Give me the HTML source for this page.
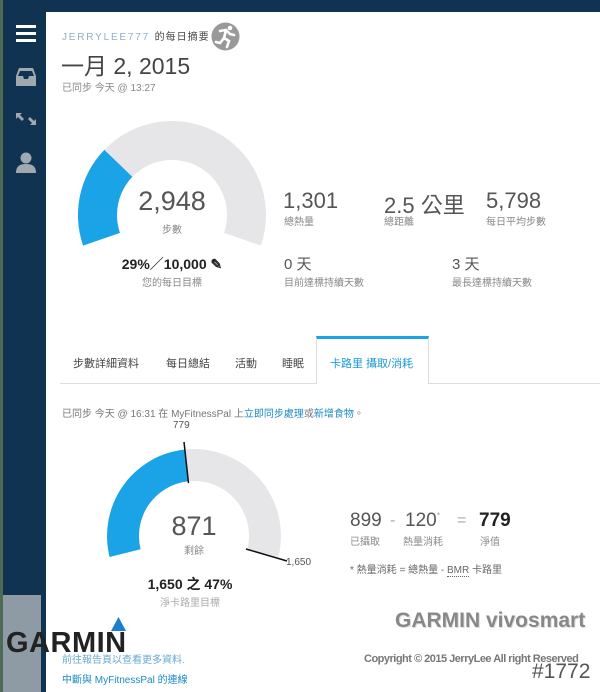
<!DOCTYPE html>
<html><head><meta charset="utf-8"><style>
*{margin:0;padding:0;box-sizing:border-box}
body{width:600px;height:692px;overflow:hidden;background:#fff;position:relative;font-family:"Liberation Sans","Noto Sans CJK TC",sans-serif;color:#333}
.a{position:absolute;white-space:nowrap}
.g{color:#888;font-size:10px}
.n{font-weight:normal;color:#555}
</style></head><body>
<div class="a" style="left:0;top:0;width:600px;height:12px;background:#0f3350"></div>
<div class="a" style="left:0;top:0;width:46px;height:692px;background:#0f3350"></div>
<div class="a" style="left:0;top:0;width:3px;height:692px;background:#4d6a55"></div>
<div class="a" style="left:16px;top:25px;width:20px;height:3px;background:#fff"></div>
<div class="a" style="left:16px;top:32px;width:20px;height:3px;background:#fff"></div>
<div class="a" style="left:16px;top:39px;width:20px;height:3px;background:#fff"></div>
<svg class="a" style="left:15px;top:67px" width="22" height="20" viewBox="0 0 22 20"><path d="M4 1H18L21 9V19H1V9Z" fill="#a0a8b0"/><path d="M5 4H17L19 9H14L13 12H9L8 9H3Z" fill="#0f3350"/></svg>
<svg class="a" style="left:15px;top:112px" width="22" height="14" viewBox="0 0 22 14"><path d="M1 1H7L5 3L9 7L7 9L3 5L1 7Z M21 13H15L17 11L13 7L15 5L19 9L21 7Z" fill="#a0a8b0"/></svg>
<svg class="a" style="left:15px;top:151px" width="22" height="22" viewBox="0 0 22 22"><circle cx="11" cy="7" r="5.5" fill="#a0a8b0"/><path d="M1 22C1 15 5 13 11 13S21 15 21 22Z" fill="#a0a8b0"/></svg>

<div class="a" style="left:62px;top:28px;font-size:10px;letter-spacing:1.8px;color:#8fb0c8">JERRYLEE777 <span style="letter-spacing:1px;color:#444">的每日摘要</span></div>
<svg class="a" style="left:211px;top:22px" width="29" height="29" viewBox="0 0 29 29"><circle cx="14.5" cy="14.5" r="14" fill="#999"/><path d="M9 9L15 8L19 12L23 13M15 8L13 16L18 19L16 25M13 16L9 21L5 20" stroke="#fff" stroke-width="2.6" fill="none" stroke-linecap="round"/><circle cx="19" cy="6" r="2.3" fill="#fff"/></svg>
<div class="a" style="left:61px;top:47px;font-size:23px;color:#444">一月 2, 2015</div>
<div class="a g" style="left:62px;top:79px">已同步 今天 @ 13:27</div>

<svg class="a" style="left:0;top:0" width="600" height="692">
<path d="M83.1,245.6A94 94 0 0 1 104.4,149.7L132.4,176.8A55 55 0 0 0 120,232.9Z" fill="#1aa3e6"/>
<path d="M104.4,149.7A94 94 0 0 1 260.9,245.6L224,232.9A55 55 0 0 0 132.4,176.8Z" fill="#e6e6e8"/>
<path d="M109.6,557A87 87 0 0 1 184.9,449.5L188.3,481.3A55 55 0 0 0 140.6,549.3Z" fill="#1aa3e6"/>
<path d="M184.9,449.5A87 87 0 0 1 278.4,557L247.4,549.3A55 55 0 0 0 188.3,481.3Z" fill="#e6e6e8"/>
<line x1="184" y1="442" x2="188.5" y2="483" stroke="#111" stroke-width="1.5"/>
<line x1="246" y1="549" x2="287" y2="561" stroke="#111" stroke-width="1.5"/>
</svg>
<div class="a n" style="left:112px;top:186px;width:120px;text-align:center;font-size:27px">2,948</div>
<div class="a g" style="left:112px;top:221px;width:120px;text-align:center">步數</div>
<div class="a" style="left:92px;top:254px;width:160px;text-align:center;font-size:14px;font-weight:bold;color:#222">29%／10,000 ✎</div>
<div class="a g" style="left:92px;top:274px;width:160px;text-align:center">您的每日目標</div>

<div class="a n" style="left:283px;top:188px;font-size:22px">1,301</div>
<div class="a g" style="left:284px;top:213px">總熱量</div>
<div class="a n" style="left:384px;top:188px;font-size:22px">2.5 公里</div>
<div class="a g" style="left:384px;top:213px">總距離</div>
<div class="a n" style="left:486px;top:188px;font-size:22px">5,798</div>
<div class="a g" style="left:486px;top:213px">每日平均步數</div>
<div class="a n" style="left:284px;top:253px;font-size:15px">0 天</div>
<div class="a g" style="left:284px;top:274px">目前達標持續天數</div>
<div class="a n" style="left:452px;top:253px;font-size:15px">3 天</div>
<div class="a g" style="left:452px;top:274px">最長達標持續天數</div>

<div class="a" style="left:60px;top:383px;width:540px;height:1px;background:#ddd"></div>
<div class="a" style="left:316px;top:336px;width:113px;height:48px;background:#fff;border:1px solid #ddd;border-top:3px solid #1aa3e6;border-bottom:none"></div>
<div class="a" style="left:73px;top:355px;font-size:11px;color:#444">步數詳細資料</div>
<div class="a" style="left:166px;top:355px;font-size:11px;color:#444">每日總結</div>
<div class="a" style="left:235px;top:355px;font-size:11px;color:#444">活動</div>
<div class="a" style="left:282px;top:355px;font-size:11px;color:#444">睡眠</div>
<div class="a" style="left:330px;top:355px;font-size:11px;color:#1a9ad6">卡路里 攝取/消耗</div>

<div class="a g" style="left:62px;top:405px;color:#777">已同步 今天 @ 16:31 在 MyFitnessPal 上<span style="color:#1a8ac6">立即同步處理</span>或<span style="color:#1a8ac6">新增食物</span>。</div>
<div class="a g" style="left:173px;top:420px;color:#555">779</div>
<div class="a n" style="left:144px;top:511px;width:100px;text-align:center;font-size:27px">871</div>
<div class="a g" style="left:144px;top:542px;width:100px;text-align:center">剩餘</div>
<div class="a g" style="left:286px;top:557px;color:#555">1,650</div>
<div class="a" style="left:115px;top:574px;width:150px;text-align:center;font-size:14px;font-weight:bold;color:#222">1,650 之 47%</div>
<div class="a g" style="left:115px;top:594px;width:150px;text-align:center;color:#aaa">淨卡路里目標</div>

<div class="a n" style="left:350px;top:510px;font-size:19px">899</div>
<div class="a" style="left:390px;top:512px;font-size:16px;color:#aaa">-</div>
<div class="a n" style="left:405px;top:510px;font-size:19px">120<sup style="font-size:9px;color:#aaa">*</sup></div>
<div class="a" style="left:457px;top:512px;font-size:16px;color:#aaa">=</div>
<div class="a" style="left:479px;top:510px;font-size:19px;font-weight:bold;color:#222">779</div>
<div class="a g" style="left:350px;top:533px">已攝取</div>
<div class="a g" style="left:403px;top:533px">熱量消耗</div>
<div class="a g" style="left:480px;top:533px">淨值</div>
<div class="a g" style="left:350px;top:561px;color:#666">* 熱量消耗 = 總熱量 - <span style="border-bottom:1px dotted #666">BMR</span> 卡路里</div>

<div class="a" style="left:3px;top:595px;width:38px;height:97px;background:#8e9ba5"></div>
<svg class="a" style="left:111px;top:617px" width="15" height="14"><path d="M7.5 0L15 14H0Z" fill="#1a7fd0"/></svg>
<div class="a" style="left:62px;top:651px;font-size:10px;color:#6aa8d0">前往報告頁以查看更多資料.</div>
<div class="a" style="left:6px;top:627px;font-size:29px;font-weight:bold;color:#222;letter-spacing:0.5px">GARMIN</div>
<div class="a" style="left:62px;top:671px;font-size:10px;color:#1a8ac6">中斷與 MyFitnessPal 的連線</div>
<div class="a" style="left:395px;top:609px;font-size:21px;font-weight:bold;color:#888;text-shadow:1px 1px 0 #ddd">GARMIN vivosmart</div>
<div class="a" style="left:364px;top:653px;font-size:11px;font-weight:bold;color:#777;letter-spacing:-0.5px">Copyright © 2015 JerryLee All right Reserved</div>
<div class="a" style="left:532px;top:660px;font-size:21px;color:#555">#1772</div>
</body></html>
